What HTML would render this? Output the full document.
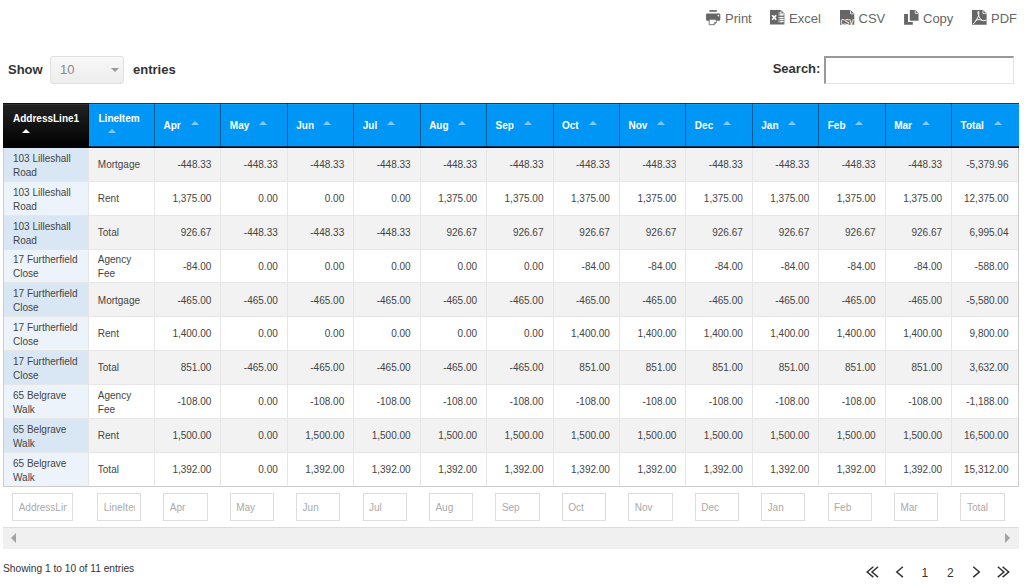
<!DOCTYPE html><html><head><meta charset="utf-8"><style>
*{margin:0;padding:0;box-sizing:border-box}
html,body{width:1024px;height:585px;overflow:hidden;background:#fff;font-family:"Liberation Sans",sans-serif}
.abs{position:absolute}
.btn{position:absolute;top:8px;height:20px;color:#666;font-size:13px;line-height:20px;white-space:nowrap}
.lbl{position:absolute;font-weight:bold;font-size:13px;color:#333;line-height:16px;white-space:nowrap}
.hd{position:absolute;top:103px;height:45px;background:#0096f5;}
.hd.s{background:linear-gradient(#242424,#000)}
.ht{position:absolute;left:10px;color:#fff;font-weight:bold;font-size:10px;line-height:14px;white-space:nowrap}
.arr{position:absolute;width:0;height:0;border-left:4.4px solid transparent;border-right:4.4px solid transparent;border-bottom:4.2px solid rgba(255,255,255,.5)}
.hd.s .arr{border-bottom-color:#fff}
.c{position:absolute;font-size:10px;color:#444;line-height:14px;white-space:nowrap}
.fi{position:absolute;height:28px;border:1px solid #ddd;background:#fff;font-size:10px;color:#aaa;line-height:26px;white-space:nowrap}
</style></head><body>
<div class="btn" style="left:706px"><svg width="16" height="16" viewBox="0 0 16 16" style="position:absolute;left:0;top:2px;overflow:visible"><rect x="3.4" y="0.1" width="7.4" height="1.7" fill="#666"/><rect x="0.1" y="3.5" width="14.2" height="7.2" rx="1" fill="#666"/><circle cx="12.4" cy="5.6" r="0.85" fill="#fff"/><path d="M3.2 9.2 H10.2 V12.6 L8.2 14.7 H3.2 Z" fill="#fff" stroke="#666" stroke-width="0.9"/><path d="M8.2 14.7 V12.6 H10.2" fill="none" stroke="#666" stroke-width="0.8"/></svg><span style="position:absolute;left:19px;top:1px">Print</span></div>
<div class="btn" style="left:770px"><svg width="16" height="16" viewBox="0 0 16 16" style="position:absolute;left:0;top:2px;overflow:visible"><path d="M0 0 H11 L14.4 3.4 V14.6 H0 Z" fill="#666"/><path d="M11 0.3 V3.4 H14.2" fill="none" stroke="#fff" stroke-width="0.7"/><path d="M2.2 5.2 L6.2 9.8 M6.2 5.2 L2.2 9.8" stroke="#fff" stroke-width="1.7"/><rect x="8.6" y="2.3" width="1" height="1.2" fill="#fff"/><rect x="10" y="2.3" width="1.1" height="1.2" fill="#fff"/><rect x="8.6" y="4.1" width="1" height="1.5" fill="#fff"/><rect x="10" y="4.1" width="3.7" height="1.5" fill="#fff"/><rect x="8.6" y="6.9" width="1" height="1.4" fill="#fff"/><rect x="10" y="6.9" width="3.7" height="1.4" fill="#fff"/><rect x="8.6" y="9" width="1" height="1.3" fill="#fff"/><rect x="10" y="9" width="3.7" height="1.3" fill="#fff"/><rect x="8.6" y="11.1" width="1" height="1.2" fill="#fff"/><rect x="10" y="11.1" width="3.7" height="1.2" fill="#fff"/></svg><span style="position:absolute;left:19px;top:1px">Excel</span></div>
<div class="btn" style="left:839.5px"><svg width="16" height="16" viewBox="0 0 16 16" style="position:absolute;left:0;top:2px;overflow:visible"><path d="M0 0 H10.5 L14.3 3.8 V14.8 H0 Z" fill="#666"/><path d="M10.5 0.3 V3.8 H14.1" fill="none" stroke="#fff" stroke-width="0.8"/><text x="7.1" y="14.6" text-anchor="middle" font-family="Liberation Sans" font-size="10.5" fill="#fff" textLength="13.4" lengthAdjust="spacingAndGlyphs">csv</text></svg><span style="position:absolute;left:19px;top:1px">CSV</span></div>
<div class="btn" style="left:904px"><svg width="16" height="16" viewBox="0 0 16 16" style="position:absolute;left:0;top:2px;overflow:visible"><path d="M0.1 4 H4 V12 H8.8 V14.7 H0.1 Z" fill="#666"/><path d="M5.8 0.1 H11.3 L14.5 3.3 V10.8 H5.8 Z" fill="#666"/><path d="M11.2 0.4 V3.4 H14.3" fill="none" stroke="#fff" stroke-width="0.8"/></svg><span style="position:absolute;left:19px;top:1px">Copy</span></div>
<div class="btn" style="left:972px"><svg width="16" height="16" viewBox="0 0 16 16" style="position:absolute;left:0;top:2px;overflow:visible"><path d="M0 0 H11 L14.6 3.6 V14.8 H0 Z" fill="#666"/><path d="M11 0.3 V3.6 H14.4" fill="none" stroke="#fff" stroke-width="0.8"/><path d="M6.3 1.2 C5.6 2 6.2 4 6.6 5.6 C5.5 8.2 3.8 11.5 1 14.2 M6.6 5.6 C7.3 7.6 8.3 9 10.2 10.5 C11.2 10.8 12.5 10.6 14.4 10.2 M6.4 1 C7 1.6 6.9 3.8 6.6 5.6 M3.6 10.2 C6 9.6 8.2 9.2 10.2 10.5" fill="none" stroke="#fff" stroke-width="1"/></svg><span style="position:absolute;left:19px;top:1px">PDF</span></div>
<div class="lbl" style="left:8px;top:61.5px">Show</div>
<div class="abs" style="left:50px;top:56px;width:74px;height:28px;border:1px solid #e0e0e0;border-radius:3px;background:linear-gradient(#f8f8f8,#ededed)"><span style="position:absolute;left:9px;top:5px;font-size:13px;color:#888;line-height:16px">10</span><span style="position:absolute;left:59.5px;top:10.5px;width:0;height:0;border-left:4.3px solid transparent;border-right:4.3px solid transparent;border-top:4.3px solid #999"></span></div>
<div class="lbl" style="left:133px;top:61.5px">entries</div>
<div class="lbl" style="left:772.7px;top:61px">Search:</div>
<div class="abs" style="left:824px;top:56px;width:190px;height:28px;border-top:2px solid #999;border-left:2px solid #999;border-right:1px solid #e4e4e4;border-bottom:1px solid #e4e4e4;background:#fff"></div>
<div class="abs" style="left:3.0px;top:103px;width:1015.5200000000001px;height:1px;background:rgba(0,0,0,.55);z-index:3"></div>
<div class="abs" style="left:3.0px;top:104px;width:1015.5200000000001px;height:1px;background:rgba(255,255,255,.07);z-index:3"></div>
<div class="abs" style="left:3.0px;top:146px;width:1015.5200000000001px;height:1px;background:rgba(0,0,0,.65);z-index:3"></div>
<div class="abs" style="left:3.0px;top:147px;width:1015.5200000000001px;height:1px;background:#000;z-index:3"></div>
<div class="hd s" style="left:3.0px;width:85.5px"><span class="ht" style="top:9px">AddressLine1</span><span class="arr" style="left:19px;top:26px"></span></div>
<div class="hd" style="left:88.5px;width:66.43px"><span class="ht" style="top:9px">LineItem</span><span class="arr" style="left:19px;top:26px"></span></div>
<div class="abs" style="left:87.5px;top:103px;width:1px;height:45px;background:rgba(0,0,0,.4);z-index:2"></div>
<div class="hd" style="left:154.93px;width:66.43px"><span class="ht" style="top:16px;left:8.5px">Apr</span><span class="arr" style="left:35.67px;top:18px"></span></div>
<div class="abs" style="left:153.93px;top:103px;width:1px;height:45px;background:rgba(0,0,0,.4);z-index:2"></div>
<div class="hd" style="left:221.36px;width:66.43px"><span class="ht" style="top:16px;left:8.5px">May</span><span class="arr" style="left:38.14px;top:18px"></span></div>
<div class="abs" style="left:220.36px;top:103px;width:1px;height:45px;background:rgba(0,0,0,.4);z-index:2"></div>
<div class="hd" style="left:287.79px;width:66.43px"><span class="ht" style="top:16px;left:8.5px">Jun</span><span class="arr" style="left:35.01px;top:18px"></span></div>
<div class="abs" style="left:286.79px;top:103px;width:1px;height:45px;background:rgba(0,0,0,.4);z-index:2"></div>
<div class="hd" style="left:354.22px;width:66.43px"><span class="ht" style="top:16px;left:8.5px">Jul</span><span class="arr" style="left:32.68px;top:18px"></span></div>
<div class="abs" style="left:353.22px;top:103px;width:1px;height:45px;background:rgba(0,0,0,.4);z-index:2"></div>
<div class="hd" style="left:420.65px;width:66.43px"><span class="ht" style="top:16px;left:8.5px">Aug</span><span class="arr" style="left:37.35px;top:18px"></span></div>
<div class="abs" style="left:419.65px;top:103px;width:1px;height:45px;background:rgba(0,0,0,.4);z-index:2"></div>
<div class="hd" style="left:487.08px;width:66.43px"><span class="ht" style="top:16px;left:8.5px">Sep</span><span class="arr" style="left:36.62px;top:18px"></span></div>
<div class="abs" style="left:486.08px;top:103px;width:1px;height:45px;background:rgba(0,0,0,.4);z-index:2"></div>
<div class="hd" style="left:553.51px;width:66.43px"><span class="ht" style="top:16px;left:8.5px">Oct</span><span class="arr" style="left:35.29px;top:18px"></span></div>
<div class="abs" style="left:552.51px;top:103px;width:1px;height:45px;background:rgba(0,0,0,.4);z-index:2"></div>
<div class="hd" style="left:619.94px;width:66.43px"><span class="ht" style="top:16px;left:8.5px">Nov</span><span class="arr" style="left:36.86px;top:18px"></span></div>
<div class="abs" style="left:618.94px;top:103px;width:1px;height:45px;background:rgba(0,0,0,.4);z-index:2"></div>
<div class="hd" style="left:686.37px;width:66.43px"><span class="ht" style="top:16px;left:8.5px">Dec</span><span class="arr" style="left:36.93px;top:18px"></span></div>
<div class="abs" style="left:685.37px;top:103px;width:1px;height:45px;background:rgba(0,0,0,.4);z-index:2"></div>
<div class="hd" style="left:752.8px;width:66.43px"><span class="ht" style="top:16px;left:8.5px">Jan</span><span class="arr" style="left:34.9px;top:18px"></span></div>
<div class="abs" style="left:751.8px;top:103px;width:1px;height:45px;background:rgba(0,0,0,.4);z-index:2"></div>
<div class="hd" style="left:819.23px;width:66.43px"><span class="ht" style="top:16px;left:8.5px">Feb</span><span class="arr" style="left:36.27px;top:18px"></span></div>
<div class="abs" style="left:818.23px;top:103px;width:1px;height:45px;background:rgba(0,0,0,.4);z-index:2"></div>
<div class="hd" style="left:885.66px;width:66.43px"><span class="ht" style="top:16px;left:8.5px">Mar</span><span class="arr" style="left:36.54px;top:18px"></span></div>
<div class="abs" style="left:884.66px;top:103px;width:1px;height:45px;background:rgba(0,0,0,.4);z-index:2"></div>
<div class="hd" style="left:952.09px;width:66.43px"><span class="ht" style="top:16px;left:8.5px">Total</span><span class="arr" style="left:41.81px;top:18px"></span></div>
<div class="abs" style="left:951.09px;top:103px;width:1px;height:45px;background:rgba(0,0,0,.4);z-index:2"></div>
<div class="abs" style="left:3.0px;top:148.0px;width:85.5px;height:33.85px;background:#d9e6f4"></div>
<div class="c" style="left:13.0px;top:151.9px">103 Lilleshall<br>Road</div>
<div class="abs" style="left:88.5px;top:148.0px;width:66.43px;height:33.85px;background:#f2f2f2"></div>
<div class="c" style="left:97.8px;top:158.2px">Mortgage</div>
<div class="abs" style="left:154.93px;top:148.0px;width:66.43px;height:33.85px;background:#f2f2f2"></div>
<div class="c" style="left:154.93px;top:158.2px;width:56.43px;text-align:right">-448.33</div>
<div class="abs" style="left:221.36px;top:148.0px;width:66.43px;height:33.85px;background:#f2f2f2"></div>
<div class="c" style="left:221.36px;top:158.2px;width:56.43px;text-align:right">-448.33</div>
<div class="abs" style="left:287.79px;top:148.0px;width:66.43px;height:33.85px;background:#f2f2f2"></div>
<div class="c" style="left:287.79px;top:158.2px;width:56.43px;text-align:right">-448.33</div>
<div class="abs" style="left:354.22px;top:148.0px;width:66.43px;height:33.85px;background:#f2f2f2"></div>
<div class="c" style="left:354.22px;top:158.2px;width:56.43px;text-align:right">-448.33</div>
<div class="abs" style="left:420.65px;top:148.0px;width:66.43px;height:33.85px;background:#f2f2f2"></div>
<div class="c" style="left:420.65px;top:158.2px;width:56.43px;text-align:right">-448.33</div>
<div class="abs" style="left:487.08px;top:148.0px;width:66.43px;height:33.85px;background:#f2f2f2"></div>
<div class="c" style="left:487.08px;top:158.2px;width:56.43px;text-align:right">-448.33</div>
<div class="abs" style="left:553.51px;top:148.0px;width:66.43px;height:33.85px;background:#f2f2f2"></div>
<div class="c" style="left:553.51px;top:158.2px;width:56.43px;text-align:right">-448.33</div>
<div class="abs" style="left:619.94px;top:148.0px;width:66.43px;height:33.85px;background:#f2f2f2"></div>
<div class="c" style="left:619.94px;top:158.2px;width:56.43px;text-align:right">-448.33</div>
<div class="abs" style="left:686.37px;top:148.0px;width:66.43px;height:33.85px;background:#f2f2f2"></div>
<div class="c" style="left:686.37px;top:158.2px;width:56.43px;text-align:right">-448.33</div>
<div class="abs" style="left:752.8px;top:148.0px;width:66.43px;height:33.85px;background:#f2f2f2"></div>
<div class="c" style="left:752.8px;top:158.2px;width:56.43px;text-align:right">-448.33</div>
<div class="abs" style="left:819.23px;top:148.0px;width:66.43px;height:33.85px;background:#f2f2f2"></div>
<div class="c" style="left:819.23px;top:158.2px;width:56.43px;text-align:right">-448.33</div>
<div class="abs" style="left:885.66px;top:148.0px;width:66.43px;height:33.85px;background:#f2f2f2"></div>
<div class="c" style="left:885.66px;top:158.2px;width:56.43px;text-align:right">-448.33</div>
<div class="abs" style="left:952.09px;top:148.0px;width:66.43px;height:33.85px;background:#f2f2f2"></div>
<div class="c" style="left:952.09px;top:158.2px;width:56.43px;text-align:right">-5,379.96</div>
<div class="abs" style="left:3.0px;top:180.85px;width:1015.5200000000001px;height:1px;background:#e6e6e6"></div>
<div class="abs" style="left:3.0px;top:181.85px;width:85.5px;height:33.85px;background:#edf3fa"></div>
<div class="c" style="left:13.0px;top:185.75px">103 Lilleshall<br>Road</div>
<div class="abs" style="left:88.5px;top:181.85px;width:66.43px;height:33.85px;background:#fff"></div>
<div class="c" style="left:97.8px;top:192.05px">Rent</div>
<div class="abs" style="left:154.93px;top:181.85px;width:66.43px;height:33.85px;background:#fff"></div>
<div class="c" style="left:154.93px;top:192.05px;width:56.43px;text-align:right">1,375.00</div>
<div class="abs" style="left:221.36px;top:181.85px;width:66.43px;height:33.85px;background:#fff"></div>
<div class="c" style="left:221.36px;top:192.05px;width:56.43px;text-align:right">0.00</div>
<div class="abs" style="left:287.79px;top:181.85px;width:66.43px;height:33.85px;background:#fff"></div>
<div class="c" style="left:287.79px;top:192.05px;width:56.43px;text-align:right">0.00</div>
<div class="abs" style="left:354.22px;top:181.85px;width:66.43px;height:33.85px;background:#fff"></div>
<div class="c" style="left:354.22px;top:192.05px;width:56.43px;text-align:right">0.00</div>
<div class="abs" style="left:420.65px;top:181.85px;width:66.43px;height:33.85px;background:#fff"></div>
<div class="c" style="left:420.65px;top:192.05px;width:56.43px;text-align:right">1,375.00</div>
<div class="abs" style="left:487.08px;top:181.85px;width:66.43px;height:33.85px;background:#fff"></div>
<div class="c" style="left:487.08px;top:192.05px;width:56.43px;text-align:right">1,375.00</div>
<div class="abs" style="left:553.51px;top:181.85px;width:66.43px;height:33.85px;background:#fff"></div>
<div class="c" style="left:553.51px;top:192.05px;width:56.43px;text-align:right">1,375.00</div>
<div class="abs" style="left:619.94px;top:181.85px;width:66.43px;height:33.85px;background:#fff"></div>
<div class="c" style="left:619.94px;top:192.05px;width:56.43px;text-align:right">1,375.00</div>
<div class="abs" style="left:686.37px;top:181.85px;width:66.43px;height:33.85px;background:#fff"></div>
<div class="c" style="left:686.37px;top:192.05px;width:56.43px;text-align:right">1,375.00</div>
<div class="abs" style="left:752.8px;top:181.85px;width:66.43px;height:33.85px;background:#fff"></div>
<div class="c" style="left:752.8px;top:192.05px;width:56.43px;text-align:right">1,375.00</div>
<div class="abs" style="left:819.23px;top:181.85px;width:66.43px;height:33.85px;background:#fff"></div>
<div class="c" style="left:819.23px;top:192.05px;width:56.43px;text-align:right">1,375.00</div>
<div class="abs" style="left:885.66px;top:181.85px;width:66.43px;height:33.85px;background:#fff"></div>
<div class="c" style="left:885.66px;top:192.05px;width:56.43px;text-align:right">1,375.00</div>
<div class="abs" style="left:952.09px;top:181.85px;width:66.43px;height:33.85px;background:#fff"></div>
<div class="c" style="left:952.09px;top:192.05px;width:56.43px;text-align:right">12,375.00</div>
<div class="abs" style="left:3.0px;top:214.7px;width:1015.5200000000001px;height:1px;background:#e6e6e6"></div>
<div class="abs" style="left:3.0px;top:215.7px;width:85.5px;height:33.85px;background:#d9e6f4"></div>
<div class="c" style="left:13.0px;top:219.6px">103 Lilleshall<br>Road</div>
<div class="abs" style="left:88.5px;top:215.7px;width:66.43px;height:33.85px;background:#f2f2f2"></div>
<div class="c" style="left:97.8px;top:225.9px">Total</div>
<div class="abs" style="left:154.93px;top:215.7px;width:66.43px;height:33.85px;background:#f2f2f2"></div>
<div class="c" style="left:154.93px;top:225.9px;width:56.43px;text-align:right">926.67</div>
<div class="abs" style="left:221.36px;top:215.7px;width:66.43px;height:33.85px;background:#f2f2f2"></div>
<div class="c" style="left:221.36px;top:225.9px;width:56.43px;text-align:right">-448.33</div>
<div class="abs" style="left:287.79px;top:215.7px;width:66.43px;height:33.85px;background:#f2f2f2"></div>
<div class="c" style="left:287.79px;top:225.9px;width:56.43px;text-align:right">-448.33</div>
<div class="abs" style="left:354.22px;top:215.7px;width:66.43px;height:33.85px;background:#f2f2f2"></div>
<div class="c" style="left:354.22px;top:225.9px;width:56.43px;text-align:right">-448.33</div>
<div class="abs" style="left:420.65px;top:215.7px;width:66.43px;height:33.85px;background:#f2f2f2"></div>
<div class="c" style="left:420.65px;top:225.9px;width:56.43px;text-align:right">926.67</div>
<div class="abs" style="left:487.08px;top:215.7px;width:66.43px;height:33.85px;background:#f2f2f2"></div>
<div class="c" style="left:487.08px;top:225.9px;width:56.43px;text-align:right">926.67</div>
<div class="abs" style="left:553.51px;top:215.7px;width:66.43px;height:33.85px;background:#f2f2f2"></div>
<div class="c" style="left:553.51px;top:225.9px;width:56.43px;text-align:right">926.67</div>
<div class="abs" style="left:619.94px;top:215.7px;width:66.43px;height:33.85px;background:#f2f2f2"></div>
<div class="c" style="left:619.94px;top:225.9px;width:56.43px;text-align:right">926.67</div>
<div class="abs" style="left:686.37px;top:215.7px;width:66.43px;height:33.85px;background:#f2f2f2"></div>
<div class="c" style="left:686.37px;top:225.9px;width:56.43px;text-align:right">926.67</div>
<div class="abs" style="left:752.8px;top:215.7px;width:66.43px;height:33.85px;background:#f2f2f2"></div>
<div class="c" style="left:752.8px;top:225.9px;width:56.43px;text-align:right">926.67</div>
<div class="abs" style="left:819.23px;top:215.7px;width:66.43px;height:33.85px;background:#f2f2f2"></div>
<div class="c" style="left:819.23px;top:225.9px;width:56.43px;text-align:right">926.67</div>
<div class="abs" style="left:885.66px;top:215.7px;width:66.43px;height:33.85px;background:#f2f2f2"></div>
<div class="c" style="left:885.66px;top:225.9px;width:56.43px;text-align:right">926.67</div>
<div class="abs" style="left:952.09px;top:215.7px;width:66.43px;height:33.85px;background:#f2f2f2"></div>
<div class="c" style="left:952.09px;top:225.9px;width:56.43px;text-align:right">6,995.04</div>
<div class="abs" style="left:3.0px;top:248.55px;width:1015.5200000000001px;height:1px;background:#e6e6e6"></div>
<div class="abs" style="left:3.0px;top:249.55px;width:85.5px;height:33.85px;background:#edf3fa"></div>
<div class="c" style="left:13.0px;top:253.45px">17 Furtherfield<br>Close</div>
<div class="abs" style="left:88.5px;top:249.55px;width:66.43px;height:33.85px;background:#fff"></div>
<div class="c" style="left:97.8px;top:253.45px">Agency<br>Fee</div>
<div class="abs" style="left:154.93px;top:249.55px;width:66.43px;height:33.85px;background:#fff"></div>
<div class="c" style="left:154.93px;top:259.75px;width:56.43px;text-align:right">-84.00</div>
<div class="abs" style="left:221.36px;top:249.55px;width:66.43px;height:33.85px;background:#fff"></div>
<div class="c" style="left:221.36px;top:259.75px;width:56.43px;text-align:right">0.00</div>
<div class="abs" style="left:287.79px;top:249.55px;width:66.43px;height:33.85px;background:#fff"></div>
<div class="c" style="left:287.79px;top:259.75px;width:56.43px;text-align:right">0.00</div>
<div class="abs" style="left:354.22px;top:249.55px;width:66.43px;height:33.85px;background:#fff"></div>
<div class="c" style="left:354.22px;top:259.75px;width:56.43px;text-align:right">0.00</div>
<div class="abs" style="left:420.65px;top:249.55px;width:66.43px;height:33.85px;background:#fff"></div>
<div class="c" style="left:420.65px;top:259.75px;width:56.43px;text-align:right">0.00</div>
<div class="abs" style="left:487.08px;top:249.55px;width:66.43px;height:33.85px;background:#fff"></div>
<div class="c" style="left:487.08px;top:259.75px;width:56.43px;text-align:right">0.00</div>
<div class="abs" style="left:553.51px;top:249.55px;width:66.43px;height:33.85px;background:#fff"></div>
<div class="c" style="left:553.51px;top:259.75px;width:56.43px;text-align:right">-84.00</div>
<div class="abs" style="left:619.94px;top:249.55px;width:66.43px;height:33.85px;background:#fff"></div>
<div class="c" style="left:619.94px;top:259.75px;width:56.43px;text-align:right">-84.00</div>
<div class="abs" style="left:686.37px;top:249.55px;width:66.43px;height:33.85px;background:#fff"></div>
<div class="c" style="left:686.37px;top:259.75px;width:56.43px;text-align:right">-84.00</div>
<div class="abs" style="left:752.8px;top:249.55px;width:66.43px;height:33.85px;background:#fff"></div>
<div class="c" style="left:752.8px;top:259.75px;width:56.43px;text-align:right">-84.00</div>
<div class="abs" style="left:819.23px;top:249.55px;width:66.43px;height:33.85px;background:#fff"></div>
<div class="c" style="left:819.23px;top:259.75px;width:56.43px;text-align:right">-84.00</div>
<div class="abs" style="left:885.66px;top:249.55px;width:66.43px;height:33.85px;background:#fff"></div>
<div class="c" style="left:885.66px;top:259.75px;width:56.43px;text-align:right">-84.00</div>
<div class="abs" style="left:952.09px;top:249.55px;width:66.43px;height:33.85px;background:#fff"></div>
<div class="c" style="left:952.09px;top:259.75px;width:56.43px;text-align:right">-588.00</div>
<div class="abs" style="left:3.0px;top:282.4px;width:1015.5200000000001px;height:1px;background:#e6e6e6"></div>
<div class="abs" style="left:3.0px;top:283.4px;width:85.5px;height:33.85px;background:#d9e6f4"></div>
<div class="c" style="left:13.0px;top:287.3px">17 Furtherfield<br>Close</div>
<div class="abs" style="left:88.5px;top:283.4px;width:66.43px;height:33.85px;background:#f2f2f2"></div>
<div class="c" style="left:97.8px;top:293.6px">Mortgage</div>
<div class="abs" style="left:154.93px;top:283.4px;width:66.43px;height:33.85px;background:#f2f2f2"></div>
<div class="c" style="left:154.93px;top:293.6px;width:56.43px;text-align:right">-465.00</div>
<div class="abs" style="left:221.36px;top:283.4px;width:66.43px;height:33.85px;background:#f2f2f2"></div>
<div class="c" style="left:221.36px;top:293.6px;width:56.43px;text-align:right">-465.00</div>
<div class="abs" style="left:287.79px;top:283.4px;width:66.43px;height:33.85px;background:#f2f2f2"></div>
<div class="c" style="left:287.79px;top:293.6px;width:56.43px;text-align:right">-465.00</div>
<div class="abs" style="left:354.22px;top:283.4px;width:66.43px;height:33.85px;background:#f2f2f2"></div>
<div class="c" style="left:354.22px;top:293.6px;width:56.43px;text-align:right">-465.00</div>
<div class="abs" style="left:420.65px;top:283.4px;width:66.43px;height:33.85px;background:#f2f2f2"></div>
<div class="c" style="left:420.65px;top:293.6px;width:56.43px;text-align:right">-465.00</div>
<div class="abs" style="left:487.08px;top:283.4px;width:66.43px;height:33.85px;background:#f2f2f2"></div>
<div class="c" style="left:487.08px;top:293.6px;width:56.43px;text-align:right">-465.00</div>
<div class="abs" style="left:553.51px;top:283.4px;width:66.43px;height:33.85px;background:#f2f2f2"></div>
<div class="c" style="left:553.51px;top:293.6px;width:56.43px;text-align:right">-465.00</div>
<div class="abs" style="left:619.94px;top:283.4px;width:66.43px;height:33.85px;background:#f2f2f2"></div>
<div class="c" style="left:619.94px;top:293.6px;width:56.43px;text-align:right">-465.00</div>
<div class="abs" style="left:686.37px;top:283.4px;width:66.43px;height:33.85px;background:#f2f2f2"></div>
<div class="c" style="left:686.37px;top:293.6px;width:56.43px;text-align:right">-465.00</div>
<div class="abs" style="left:752.8px;top:283.4px;width:66.43px;height:33.85px;background:#f2f2f2"></div>
<div class="c" style="left:752.8px;top:293.6px;width:56.43px;text-align:right">-465.00</div>
<div class="abs" style="left:819.23px;top:283.4px;width:66.43px;height:33.85px;background:#f2f2f2"></div>
<div class="c" style="left:819.23px;top:293.6px;width:56.43px;text-align:right">-465.00</div>
<div class="abs" style="left:885.66px;top:283.4px;width:66.43px;height:33.85px;background:#f2f2f2"></div>
<div class="c" style="left:885.66px;top:293.6px;width:56.43px;text-align:right">-465.00</div>
<div class="abs" style="left:952.09px;top:283.4px;width:66.43px;height:33.85px;background:#f2f2f2"></div>
<div class="c" style="left:952.09px;top:293.6px;width:56.43px;text-align:right">-5,580.00</div>
<div class="abs" style="left:3.0px;top:316.25px;width:1015.5200000000001px;height:1px;background:#e6e6e6"></div>
<div class="abs" style="left:3.0px;top:317.25px;width:85.5px;height:33.85px;background:#edf3fa"></div>
<div class="c" style="left:13.0px;top:321.15px">17 Furtherfield<br>Close</div>
<div class="abs" style="left:88.5px;top:317.25px;width:66.43px;height:33.85px;background:#fff"></div>
<div class="c" style="left:97.8px;top:327.45px">Rent</div>
<div class="abs" style="left:154.93px;top:317.25px;width:66.43px;height:33.85px;background:#fff"></div>
<div class="c" style="left:154.93px;top:327.45px;width:56.43px;text-align:right">1,400.00</div>
<div class="abs" style="left:221.36px;top:317.25px;width:66.43px;height:33.85px;background:#fff"></div>
<div class="c" style="left:221.36px;top:327.45px;width:56.43px;text-align:right">0.00</div>
<div class="abs" style="left:287.79px;top:317.25px;width:66.43px;height:33.85px;background:#fff"></div>
<div class="c" style="left:287.79px;top:327.45px;width:56.43px;text-align:right">0.00</div>
<div class="abs" style="left:354.22px;top:317.25px;width:66.43px;height:33.85px;background:#fff"></div>
<div class="c" style="left:354.22px;top:327.45px;width:56.43px;text-align:right">0.00</div>
<div class="abs" style="left:420.65px;top:317.25px;width:66.43px;height:33.85px;background:#fff"></div>
<div class="c" style="left:420.65px;top:327.45px;width:56.43px;text-align:right">0.00</div>
<div class="abs" style="left:487.08px;top:317.25px;width:66.43px;height:33.85px;background:#fff"></div>
<div class="c" style="left:487.08px;top:327.45px;width:56.43px;text-align:right">0.00</div>
<div class="abs" style="left:553.51px;top:317.25px;width:66.43px;height:33.85px;background:#fff"></div>
<div class="c" style="left:553.51px;top:327.45px;width:56.43px;text-align:right">1,400.00</div>
<div class="abs" style="left:619.94px;top:317.25px;width:66.43px;height:33.85px;background:#fff"></div>
<div class="c" style="left:619.94px;top:327.45px;width:56.43px;text-align:right">1,400.00</div>
<div class="abs" style="left:686.37px;top:317.25px;width:66.43px;height:33.85px;background:#fff"></div>
<div class="c" style="left:686.37px;top:327.45px;width:56.43px;text-align:right">1,400.00</div>
<div class="abs" style="left:752.8px;top:317.25px;width:66.43px;height:33.85px;background:#fff"></div>
<div class="c" style="left:752.8px;top:327.45px;width:56.43px;text-align:right">1,400.00</div>
<div class="abs" style="left:819.23px;top:317.25px;width:66.43px;height:33.85px;background:#fff"></div>
<div class="c" style="left:819.23px;top:327.45px;width:56.43px;text-align:right">1,400.00</div>
<div class="abs" style="left:885.66px;top:317.25px;width:66.43px;height:33.85px;background:#fff"></div>
<div class="c" style="left:885.66px;top:327.45px;width:56.43px;text-align:right">1,400.00</div>
<div class="abs" style="left:952.09px;top:317.25px;width:66.43px;height:33.85px;background:#fff"></div>
<div class="c" style="left:952.09px;top:327.45px;width:56.43px;text-align:right">9,800.00</div>
<div class="abs" style="left:3.0px;top:350.1px;width:1015.5200000000001px;height:1px;background:#e6e6e6"></div>
<div class="abs" style="left:3.0px;top:351.1px;width:85.5px;height:33.85px;background:#d9e6f4"></div>
<div class="c" style="left:13.0px;top:355.0px">17 Furtherfield<br>Close</div>
<div class="abs" style="left:88.5px;top:351.1px;width:66.43px;height:33.85px;background:#f2f2f2"></div>
<div class="c" style="left:97.8px;top:361.3px">Total</div>
<div class="abs" style="left:154.93px;top:351.1px;width:66.43px;height:33.85px;background:#f2f2f2"></div>
<div class="c" style="left:154.93px;top:361.3px;width:56.43px;text-align:right">851.00</div>
<div class="abs" style="left:221.36px;top:351.1px;width:66.43px;height:33.85px;background:#f2f2f2"></div>
<div class="c" style="left:221.36px;top:361.3px;width:56.43px;text-align:right">-465.00</div>
<div class="abs" style="left:287.79px;top:351.1px;width:66.43px;height:33.85px;background:#f2f2f2"></div>
<div class="c" style="left:287.79px;top:361.3px;width:56.43px;text-align:right">-465.00</div>
<div class="abs" style="left:354.22px;top:351.1px;width:66.43px;height:33.85px;background:#f2f2f2"></div>
<div class="c" style="left:354.22px;top:361.3px;width:56.43px;text-align:right">-465.00</div>
<div class="abs" style="left:420.65px;top:351.1px;width:66.43px;height:33.85px;background:#f2f2f2"></div>
<div class="c" style="left:420.65px;top:361.3px;width:56.43px;text-align:right">-465.00</div>
<div class="abs" style="left:487.08px;top:351.1px;width:66.43px;height:33.85px;background:#f2f2f2"></div>
<div class="c" style="left:487.08px;top:361.3px;width:56.43px;text-align:right">-465.00</div>
<div class="abs" style="left:553.51px;top:351.1px;width:66.43px;height:33.85px;background:#f2f2f2"></div>
<div class="c" style="left:553.51px;top:361.3px;width:56.43px;text-align:right">851.00</div>
<div class="abs" style="left:619.94px;top:351.1px;width:66.43px;height:33.85px;background:#f2f2f2"></div>
<div class="c" style="left:619.94px;top:361.3px;width:56.43px;text-align:right">851.00</div>
<div class="abs" style="left:686.37px;top:351.1px;width:66.43px;height:33.85px;background:#f2f2f2"></div>
<div class="c" style="left:686.37px;top:361.3px;width:56.43px;text-align:right">851.00</div>
<div class="abs" style="left:752.8px;top:351.1px;width:66.43px;height:33.85px;background:#f2f2f2"></div>
<div class="c" style="left:752.8px;top:361.3px;width:56.43px;text-align:right">851.00</div>
<div class="abs" style="left:819.23px;top:351.1px;width:66.43px;height:33.85px;background:#f2f2f2"></div>
<div class="c" style="left:819.23px;top:361.3px;width:56.43px;text-align:right">851.00</div>
<div class="abs" style="left:885.66px;top:351.1px;width:66.43px;height:33.85px;background:#f2f2f2"></div>
<div class="c" style="left:885.66px;top:361.3px;width:56.43px;text-align:right">851.00</div>
<div class="abs" style="left:952.09px;top:351.1px;width:66.43px;height:33.85px;background:#f2f2f2"></div>
<div class="c" style="left:952.09px;top:361.3px;width:56.43px;text-align:right">3,632.00</div>
<div class="abs" style="left:3.0px;top:383.95px;width:1015.5200000000001px;height:1px;background:#e6e6e6"></div>
<div class="abs" style="left:3.0px;top:384.95px;width:85.5px;height:33.85px;background:#edf3fa"></div>
<div class="c" style="left:13.0px;top:388.85px">65 Belgrave<br>Walk</div>
<div class="abs" style="left:88.5px;top:384.95px;width:66.43px;height:33.85px;background:#fff"></div>
<div class="c" style="left:97.8px;top:388.85px">Agency<br>Fee</div>
<div class="abs" style="left:154.93px;top:384.95px;width:66.43px;height:33.85px;background:#fff"></div>
<div class="c" style="left:154.93px;top:395.15px;width:56.43px;text-align:right">-108.00</div>
<div class="abs" style="left:221.36px;top:384.95px;width:66.43px;height:33.85px;background:#fff"></div>
<div class="c" style="left:221.36px;top:395.15px;width:56.43px;text-align:right">0.00</div>
<div class="abs" style="left:287.79px;top:384.95px;width:66.43px;height:33.85px;background:#fff"></div>
<div class="c" style="left:287.79px;top:395.15px;width:56.43px;text-align:right">-108.00</div>
<div class="abs" style="left:354.22px;top:384.95px;width:66.43px;height:33.85px;background:#fff"></div>
<div class="c" style="left:354.22px;top:395.15px;width:56.43px;text-align:right">-108.00</div>
<div class="abs" style="left:420.65px;top:384.95px;width:66.43px;height:33.85px;background:#fff"></div>
<div class="c" style="left:420.65px;top:395.15px;width:56.43px;text-align:right">-108.00</div>
<div class="abs" style="left:487.08px;top:384.95px;width:66.43px;height:33.85px;background:#fff"></div>
<div class="c" style="left:487.08px;top:395.15px;width:56.43px;text-align:right">-108.00</div>
<div class="abs" style="left:553.51px;top:384.95px;width:66.43px;height:33.85px;background:#fff"></div>
<div class="c" style="left:553.51px;top:395.15px;width:56.43px;text-align:right">-108.00</div>
<div class="abs" style="left:619.94px;top:384.95px;width:66.43px;height:33.85px;background:#fff"></div>
<div class="c" style="left:619.94px;top:395.15px;width:56.43px;text-align:right">-108.00</div>
<div class="abs" style="left:686.37px;top:384.95px;width:66.43px;height:33.85px;background:#fff"></div>
<div class="c" style="left:686.37px;top:395.15px;width:56.43px;text-align:right">-108.00</div>
<div class="abs" style="left:752.8px;top:384.95px;width:66.43px;height:33.85px;background:#fff"></div>
<div class="c" style="left:752.8px;top:395.15px;width:56.43px;text-align:right">-108.00</div>
<div class="abs" style="left:819.23px;top:384.95px;width:66.43px;height:33.85px;background:#fff"></div>
<div class="c" style="left:819.23px;top:395.15px;width:56.43px;text-align:right">-108.00</div>
<div class="abs" style="left:885.66px;top:384.95px;width:66.43px;height:33.85px;background:#fff"></div>
<div class="c" style="left:885.66px;top:395.15px;width:56.43px;text-align:right">-108.00</div>
<div class="abs" style="left:952.09px;top:384.95px;width:66.43px;height:33.85px;background:#fff"></div>
<div class="c" style="left:952.09px;top:395.15px;width:56.43px;text-align:right">-1,188.00</div>
<div class="abs" style="left:3.0px;top:417.8px;width:1015.5200000000001px;height:1px;background:#e6e6e6"></div>
<div class="abs" style="left:3.0px;top:418.8px;width:85.5px;height:33.85px;background:#d9e6f4"></div>
<div class="c" style="left:13.0px;top:422.7px">65 Belgrave<br>Walk</div>
<div class="abs" style="left:88.5px;top:418.8px;width:66.43px;height:33.85px;background:#f2f2f2"></div>
<div class="c" style="left:97.8px;top:429.0px">Rent</div>
<div class="abs" style="left:154.93px;top:418.8px;width:66.43px;height:33.85px;background:#f2f2f2"></div>
<div class="c" style="left:154.93px;top:429.0px;width:56.43px;text-align:right">1,500.00</div>
<div class="abs" style="left:221.36px;top:418.8px;width:66.43px;height:33.85px;background:#f2f2f2"></div>
<div class="c" style="left:221.36px;top:429.0px;width:56.43px;text-align:right">0.00</div>
<div class="abs" style="left:287.79px;top:418.8px;width:66.43px;height:33.85px;background:#f2f2f2"></div>
<div class="c" style="left:287.79px;top:429.0px;width:56.43px;text-align:right">1,500.00</div>
<div class="abs" style="left:354.22px;top:418.8px;width:66.43px;height:33.85px;background:#f2f2f2"></div>
<div class="c" style="left:354.22px;top:429.0px;width:56.43px;text-align:right">1,500.00</div>
<div class="abs" style="left:420.65px;top:418.8px;width:66.43px;height:33.85px;background:#f2f2f2"></div>
<div class="c" style="left:420.65px;top:429.0px;width:56.43px;text-align:right">1,500.00</div>
<div class="abs" style="left:487.08px;top:418.8px;width:66.43px;height:33.85px;background:#f2f2f2"></div>
<div class="c" style="left:487.08px;top:429.0px;width:56.43px;text-align:right">1,500.00</div>
<div class="abs" style="left:553.51px;top:418.8px;width:66.43px;height:33.85px;background:#f2f2f2"></div>
<div class="c" style="left:553.51px;top:429.0px;width:56.43px;text-align:right">1,500.00</div>
<div class="abs" style="left:619.94px;top:418.8px;width:66.43px;height:33.85px;background:#f2f2f2"></div>
<div class="c" style="left:619.94px;top:429.0px;width:56.43px;text-align:right">1,500.00</div>
<div class="abs" style="left:686.37px;top:418.8px;width:66.43px;height:33.85px;background:#f2f2f2"></div>
<div class="c" style="left:686.37px;top:429.0px;width:56.43px;text-align:right">1,500.00</div>
<div class="abs" style="left:752.8px;top:418.8px;width:66.43px;height:33.85px;background:#f2f2f2"></div>
<div class="c" style="left:752.8px;top:429.0px;width:56.43px;text-align:right">1,500.00</div>
<div class="abs" style="left:819.23px;top:418.8px;width:66.43px;height:33.85px;background:#f2f2f2"></div>
<div class="c" style="left:819.23px;top:429.0px;width:56.43px;text-align:right">1,500.00</div>
<div class="abs" style="left:885.66px;top:418.8px;width:66.43px;height:33.85px;background:#f2f2f2"></div>
<div class="c" style="left:885.66px;top:429.0px;width:56.43px;text-align:right">1,500.00</div>
<div class="abs" style="left:952.09px;top:418.8px;width:66.43px;height:33.85px;background:#f2f2f2"></div>
<div class="c" style="left:952.09px;top:429.0px;width:56.43px;text-align:right">16,500.00</div>
<div class="abs" style="left:3.0px;top:451.65px;width:1015.5200000000001px;height:1px;background:#e6e6e6"></div>
<div class="abs" style="left:3.0px;top:452.65px;width:85.5px;height:33.85px;background:#edf3fa"></div>
<div class="c" style="left:13.0px;top:456.55px">65 Belgrave<br>Walk</div>
<div class="abs" style="left:88.5px;top:452.65px;width:66.43px;height:33.85px;background:#fff"></div>
<div class="c" style="left:97.8px;top:462.85px">Total</div>
<div class="abs" style="left:154.93px;top:452.65px;width:66.43px;height:33.85px;background:#fff"></div>
<div class="c" style="left:154.93px;top:462.85px;width:56.43px;text-align:right">1,392.00</div>
<div class="abs" style="left:221.36px;top:452.65px;width:66.43px;height:33.85px;background:#fff"></div>
<div class="c" style="left:221.36px;top:462.85px;width:56.43px;text-align:right">0.00</div>
<div class="abs" style="left:287.79px;top:452.65px;width:66.43px;height:33.85px;background:#fff"></div>
<div class="c" style="left:287.79px;top:462.85px;width:56.43px;text-align:right">1,392.00</div>
<div class="abs" style="left:354.22px;top:452.65px;width:66.43px;height:33.85px;background:#fff"></div>
<div class="c" style="left:354.22px;top:462.85px;width:56.43px;text-align:right">1,392.00</div>
<div class="abs" style="left:420.65px;top:452.65px;width:66.43px;height:33.85px;background:#fff"></div>
<div class="c" style="left:420.65px;top:462.85px;width:56.43px;text-align:right">1,392.00</div>
<div class="abs" style="left:487.08px;top:452.65px;width:66.43px;height:33.85px;background:#fff"></div>
<div class="c" style="left:487.08px;top:462.85px;width:56.43px;text-align:right">1,392.00</div>
<div class="abs" style="left:553.51px;top:452.65px;width:66.43px;height:33.85px;background:#fff"></div>
<div class="c" style="left:553.51px;top:462.85px;width:56.43px;text-align:right">1,392.00</div>
<div class="abs" style="left:619.94px;top:452.65px;width:66.43px;height:33.85px;background:#fff"></div>
<div class="c" style="left:619.94px;top:462.85px;width:56.43px;text-align:right">1,392.00</div>
<div class="abs" style="left:686.37px;top:452.65px;width:66.43px;height:33.85px;background:#fff"></div>
<div class="c" style="left:686.37px;top:462.85px;width:56.43px;text-align:right">1,392.00</div>
<div class="abs" style="left:752.8px;top:452.65px;width:66.43px;height:33.85px;background:#fff"></div>
<div class="c" style="left:752.8px;top:462.85px;width:56.43px;text-align:right">1,392.00</div>
<div class="abs" style="left:819.23px;top:452.65px;width:66.43px;height:33.85px;background:#fff"></div>
<div class="c" style="left:819.23px;top:462.85px;width:56.43px;text-align:right">1,392.00</div>
<div class="abs" style="left:885.66px;top:452.65px;width:66.43px;height:33.85px;background:#fff"></div>
<div class="c" style="left:885.66px;top:462.85px;width:56.43px;text-align:right">1,392.00</div>
<div class="abs" style="left:952.09px;top:452.65px;width:66.43px;height:33.85px;background:#fff"></div>
<div class="c" style="left:952.09px;top:462.85px;width:56.43px;text-align:right">15,312.00</div>
<div class="abs" style="left:3.0px;top:485.5px;width:1015.5200000000001px;height:1px;background:#e6e6e6"></div>
<div class="abs" style="left:87.5px;top:148px;width:1px;height:338.5px;background:#e6e6e6"></div>
<div class="abs" style="left:153.93px;top:148px;width:1px;height:338.5px;background:#e6e6e6"></div>
<div class="abs" style="left:220.36px;top:148px;width:1px;height:338.5px;background:#e6e6e6"></div>
<div class="abs" style="left:286.79px;top:148px;width:1px;height:338.5px;background:#e6e6e6"></div>
<div class="abs" style="left:353.22px;top:148px;width:1px;height:338.5px;background:#e6e6e6"></div>
<div class="abs" style="left:419.65px;top:148px;width:1px;height:338.5px;background:#e6e6e6"></div>
<div class="abs" style="left:486.08px;top:148px;width:1px;height:338.5px;background:#e6e6e6"></div>
<div class="abs" style="left:552.51px;top:148px;width:1px;height:338.5px;background:#e6e6e6"></div>
<div class="abs" style="left:618.94px;top:148px;width:1px;height:338.5px;background:#e6e6e6"></div>
<div class="abs" style="left:685.37px;top:148px;width:1px;height:338.5px;background:#e6e6e6"></div>
<div class="abs" style="left:751.8px;top:148px;width:1px;height:338.5px;background:#e6e6e6"></div>
<div class="abs" style="left:818.23px;top:148px;width:1px;height:338.5px;background:#e6e6e6"></div>
<div class="abs" style="left:884.66px;top:148px;width:1px;height:338.5px;background:#e6e6e6"></div>
<div class="abs" style="left:951.09px;top:148px;width:1px;height:338.5px;background:#e6e6e6"></div>
<div class="abs" style="left:3.0px;top:148px;width:1px;height:338.5px;background:#ccc"></div>
<div class="abs" style="left:1017.5200000000001px;top:148px;width:1px;height:338.5px;background:#ccc"></div>
<div class="abs" style="left:3.0px;top:485.5px;width:1015.5200000000001px;height:1px;background:#ccc"></div>
<div class="fi" style="left:12.2px;top:493px;width:61px"><span style="position:absolute;left:5.5px;right:5px;top:0.8px;overflow:hidden">AddressLine1</span></div>
<div class="fi" style="left:97.2px;top:493px;width:43.5px"><span style="position:absolute;left:5.5px;right:5px;top:0.8px;overflow:hidden">LineItem</span></div>
<div class="fi" style="left:163.23px;top:493px;width:44.3px"><span style="position:absolute;left:5.5px;right:5px;top:0.8px;overflow:hidden">Apr</span></div>
<div class="fi" style="left:229.66px;top:493px;width:44.3px"><span style="position:absolute;left:5.5px;right:5px;top:0.8px;overflow:hidden">May</span></div>
<div class="fi" style="left:296.09px;top:493px;width:44.3px"><span style="position:absolute;left:5.5px;right:5px;top:0.8px;overflow:hidden">Jun</span></div>
<div class="fi" style="left:362.52px;top:493px;width:44.3px"><span style="position:absolute;left:5.5px;right:5px;top:0.8px;overflow:hidden">Jul</span></div>
<div class="fi" style="left:428.95px;top:493px;width:44.3px"><span style="position:absolute;left:5.5px;right:5px;top:0.8px;overflow:hidden">Aug</span></div>
<div class="fi" style="left:495.38px;top:493px;width:44.3px"><span style="position:absolute;left:5.5px;right:5px;top:0.8px;overflow:hidden">Sep</span></div>
<div class="fi" style="left:561.81px;top:493px;width:44.3px"><span style="position:absolute;left:5.5px;right:5px;top:0.8px;overflow:hidden">Oct</span></div>
<div class="fi" style="left:628.24px;top:493px;width:44.3px"><span style="position:absolute;left:5.5px;right:5px;top:0.8px;overflow:hidden">Nov</span></div>
<div class="fi" style="left:694.67px;top:493px;width:44.3px"><span style="position:absolute;left:5.5px;right:5px;top:0.8px;overflow:hidden">Dec</span></div>
<div class="fi" style="left:761.1px;top:493px;width:44.3px"><span style="position:absolute;left:5.5px;right:5px;top:0.8px;overflow:hidden">Jan</span></div>
<div class="fi" style="left:827.53px;top:493px;width:44.3px"><span style="position:absolute;left:5.5px;right:5px;top:0.8px;overflow:hidden">Feb</span></div>
<div class="fi" style="left:893.96px;top:493px;width:44.3px"><span style="position:absolute;left:5.5px;right:5px;top:0.8px;overflow:hidden">Mar</span></div>
<div class="fi" style="left:960.39px;top:493px;width:44.3px"><span style="position:absolute;left:5.5px;right:5px;top:0.8px;overflow:hidden">Total</span></div>
<div class="abs" style="left:3px;top:527px;width:1015.5200000000001px;height:21.5px;background:#f0f0f0;border-top:1px solid #ddd"></div>
<span class="abs" style="left:11px;top:533px;width:0;height:0;border-top:5px solid transparent;border-bottom:5px solid transparent;border-right:5px solid #a3a3a3"></span>
<span class="abs" style="left:1005px;top:533px;width:0;height:0;border-top:5px solid transparent;border-bottom:5px solid transparent;border-left:5px solid #a3a3a3"></span>
<div class="abs" style="left:3px;top:562.5px;font-size:10.2px;color:#333;line-height:12px;white-space:nowrap">Showing 1 to 10 of 11 entries</div>
<svg class="abs" style="left:0;top:0" width="1024" height="585"><path d="M873.30 566.8 L867.20 572 L873.30 577.1 M878.10 566.8 L872.00 572 L878.10 577.1 M902.90 566.8 L896.80 572 L902.90 577.1 M973.20 566.8 L979.30 572 L973.20 577.1 M1002.60 566.8 L1008.70 572 L1002.60 577.1 M997.80 566.8 L1003.90 572 L997.80 577.1" fill="none" stroke="#333" stroke-width="1.5"/></svg>
<div class="abs" style="left:921.5px;top:566px;font-size:12px;color:#333;line-height:14px">1</div>
<div class="abs" style="left:947px;top:566px;font-size:12px;color:#333;line-height:14px">2</div>
</body></html>
